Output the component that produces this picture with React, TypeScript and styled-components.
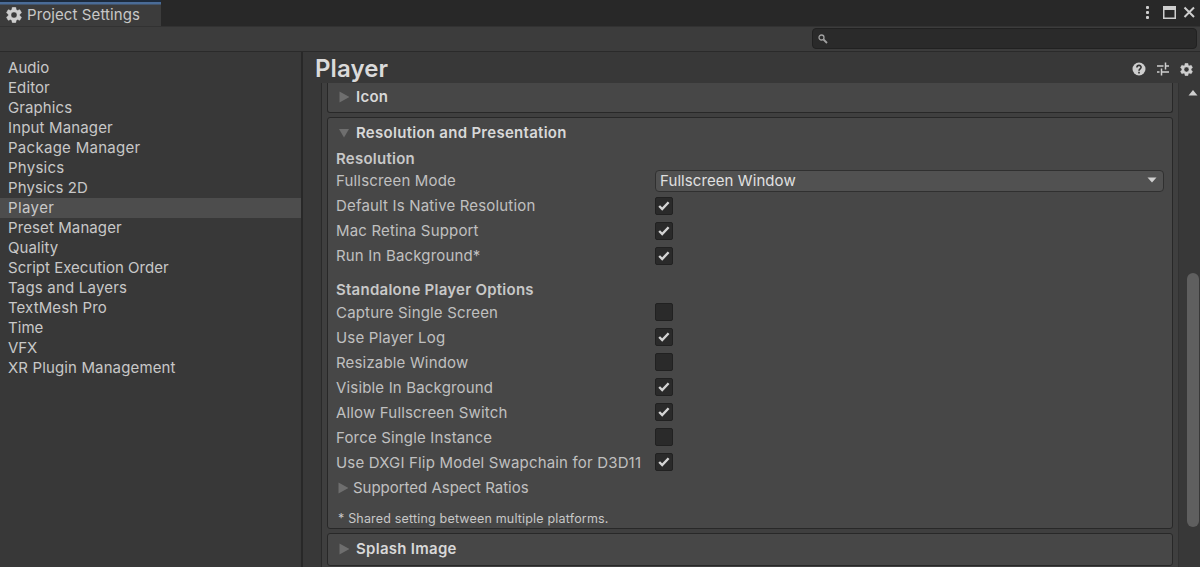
import React from "react";
import styled, { createGlobalStyle, css } from "styled-components";

const Global = createGlobalStyle`
  * { box-sizing: border-box; }
  body { margin: 0; background: #383838; overflow: hidden; }
`;

const Window = styled.div`
  width: 1200px;
  height: 567px;
  display: flex;
  flex-direction: column;
  overflow: hidden;
  background: #383838;
  color: #c8c8c8;
  font-family: Inter, "Liberation Sans", sans-serif;
  font-size: 15px;
  letter-spacing: 0.2px;
  white-space: nowrap;
`;

const TabBar = styled.header`
  flex: 0 0 26px;
  display: flex;
  justify-content: space-between;
  background: #282828;
`;

const Tab = styled.div`
  display: flex;
  align-items: center;
  gap: 5px;
  width: 161px;
  height: 26px;
  padding: 3px 0 0 6px;
  letter-spacing: 0.1px;
  background: #3c3c3c;
  box-shadow: inset 0 2px #1c2a3c, inset 0 4.5px #4a6c98;
`;

const WindowButtons = styled.div`
  display: flex;
  align-items: center;
  padding-right: 4px;
`;

const SearchBar = styled.div`
  flex: 0 0 26px;
  display: flex;
  justify-content: flex-end;
  padding: 1px 3px 0 0;
  background: #3c3c3c;
  border-top: 1px solid #323232;
  border-bottom: 1px solid #2a2a2a;
`;

const SearchField = styled.div`
  display: flex;
  align-items: center;
  width: 385px;
  height: 21px;
  padding-left: 5px;
  border: 1px solid #212121;
  border-radius: 4px;
  background: #2a2a2a;
`;

const Body = styled.div`
  flex: 1;
  min-height: 0;
  display: flex;
`;

const Sidebar = styled.nav`
  flex: 0 0 303px;
  padding-top: 6px;
  border-right: 2px solid #282828;
`;

const SidebarItem = styled.div<{ $selected?: boolean; $spacing?: number }>`
  height: 20px;
  padding-left: 8px;
  line-height: 20px;
  letter-spacing: ${(p) => p.$spacing ?? 0.2}px;
  background: ${(p) => (p.$selected ? "#4d4d4d" : "transparent")};
`;

const Main = styled.main`
  flex: 1;
  min-width: 0;
  display: flex;
  flex-direction: column;
`;

const TitleRow = styled.div`
  flex: 0 0 31px;
  display: flex;
  align-items: center;
  justify-content: space-between;
  padding: 2px 7px 0 12px;
`;

const Title = styled.h1`
  margin: 0;
  font-size: 24px;
  line-height: 29px;
  font-weight: 600;
  letter-spacing: 0.1px;
  color: #dadada;
`;

const TitleIcons = styled.div`
  display: flex;
  align-items: center;
  gap: 10px;
  padding-top: 1px;
`;

const ScrollArea = styled.div`
  flex: 1;
  min-height: 0;
  display: flex;
`;

const Panel = styled.div`
  flex: 0 0 858px;
  margin-left: 18px;
  padding: 0 5px 0 5px;
  background: #3f3f3f;
  border-left: 1px solid #2a2a2a;
  border-right: 1px solid #323232;
  overflow: hidden;
`;

const Card = styled.section<{ $height: number; $cut?: boolean }>`
  height: ${(p) => p.$height}px;
  margin-bottom: 4px;
  padding-left: 8px;
  background: #474747;
  border: 1px solid #282828;
  border-radius: 3px;
  ${(p) =>
    p.$cut &&
    css`
      border-top: 0;
      border-top-left-radius: 0;
      border-top-right-radius: 0;
    `}
`;

const CardHead = styled.div<{ $height: number }>`
  display: flex;
  align-items: center;
  gap: 7px;
  height: ${(p) => p.$height}px;
  padding-left: 3px;
  font-weight: 600;
  letter-spacing: 0.28px;
  color: #d8d8d8;
`;

const SubHead = styled.div<{ $gap?: number }>`
  height: 22px;
  margin-top: ${(p) => p.$gap ?? 0}px;
  line-height: 23px;
  font-weight: 600;
  letter-spacing: 0.25px;
`;

const Row = styled.div`
  display: flex;
  align-items: center;
  height: 25px;
  color: #c0c0c0;
`;

const ModeRow = styled(Row)`
  height: 23px;
  margin-bottom: 1px;
`;

const RowLabel = styled.span`
  flex: 0 0 319px;
  letter-spacing: 0.17px;
`;

const Foldout = styled(Row)`
  gap: 5px;
  padding-left: 2px;
  letter-spacing: -0.02px;
`;

const Note = styled.div`
  margin-top: 9px;
  padding-left: 2px;
  font-size: 12.5px;
  line-height: 20px;
  letter-spacing: 0.18px;
`;

const Dropdown = styled.div`
  display: flex;
  align-items: center;
  justify-content: space-between;
  width: 509px;
  height: 22px;
  padding: 0 6px 1px 4px;
  letter-spacing: 0.08px;
  color: #e0e0e0;
  background: #515151;
  border: 1px solid #303030;
  border-radius: 4px;
`;

const Box = styled.span<{ $lift?: boolean }>`
  display: flex;
  align-items: center;
  justify-content: center;
  width: 18px;
  height: 18px;
  margin-bottom: ${(p) => (p.$lift ? 1 : 0)}px;
  background: #2a2a2a;
  border: 1px solid #212121;
  border-radius: 2px;
`;

const ScrollBar = styled.div`
  flex: 1;
  display: flex;
  flex-direction: column;
  align-items: center;
  padding: 6px 1px 0 8px;
`;

const Thumb = styled.div`
  width: 12px;
  height: 254px;
  margin-top: 177px;
  border-radius: 6px;
  background: #5f5f5f;
`;

const GEAR =
  "M19.14 12.94a7.5 7.5 0 0 0 0-1.88l2.03-1.58a.5.5 0 0 0 .12-.61l-1.92-3.32a.5.5 0 0 0-.59-.22l-2.39.96a7 7 0 0 0-1.62-.94l-.36-2.54a.5.5 0 0 0-.48-.41h-3.84a.5.5 0 0 0-.47.41l-.36 2.54a7.4 7.4 0 0 0-1.62.94l-2.39-.96a.5.5 0 0 0-.59.22L2.74 8.87a.5.5 0 0 0 .12.61l2.03 1.58a7.5 7.5 0 0 0 0 1.88l-2.03 1.58a.5.5 0 0 0-.12.61l1.92 3.32c.12.22.37.29.59.22l2.39-.96c.5.38 1.03.7 1.62.94l.36 2.54c.05.24.24.41.48.41h3.84c.24 0 .44-.17.47-.41l.36-2.54a7.4 7.4 0 0 0 1.62-.94l2.39.96c.22.08.47 0 .59-.22l1.92-3.32a.5.5 0 0 0-.12-.61zM12 15.8a3.8 3.8 0 1 1 0-7.6 3.8 3.8 0 0 1 0 7.6z";

const Gear = ({ size }: { size: number }) => (
  <svg width={size} height={size} viewBox="2 2 20 20">
    <path d={GEAR} fill="#cecece" stroke="#cecece" strokeWidth="0.5" fillRule="evenodd" />
  </svg>
);

const Arrow = ({ open }: { open?: boolean }) => (
  <svg width="10" height="12" viewBox="0 0 10 12">
    <path d={open ? "M0 2H10L5 10.5Z" : "M0.5 0.5V11.5L10.5 6Z"} fill="#6e6e6e" />
  </svg>
);

const Check = ({ on, lift }: { on: boolean; lift?: boolean }) => (
  <Box $lift={lift}>
    {on && (
      <svg width="16" height="16" viewBox="0 0 16 16">
        <path d="M3.2 8L6.2 11L12.6 4.2" fill="none" stroke="#d4d4d4" strokeWidth="2.4" />
      </svg>
    )}
  </Box>
);

const categories: [string, number?][] = [
  ["Audio", 0.05],
  ["Editor", 0.1],
  ["Graphics", 0.1],
  ["Input Manager", 0.15],
  ["Package Manager", 0.28],
  ["Physics", 0.25],
  ["Physics 2D", 0.1],
  ["Player", 0.4],
  ["Preset Manager", 0.1],
  ["Quality", 0.1],
  ["Script Execution Order", 0.02],
  ["Tags and Layers"],
  ["TextMesh Pro", 0.1],
  ["Time", 0.05],
  ["VFX", -0.1],
  ["XR Plugin Management", 0.13],
];

const resolution: [string, boolean][] = [
  ["Default Is Native Resolution", true],
  ["Mac Retina Support", true],
  ["Run In Background*", true],
];

const standalone: [string, boolean][] = [
  ["Capture Single Screen", false],
  ["Use Player Log", true],
  ["Resizable Window", false],
  ["Visible In Background", true],
  ["Allow Fullscreen Switch", true],
  ["Force Single Instance", false],
  ["Use DXGI Flip Model Swapchain for D3D11", true],
];

const ToggleRow = ({ label, on, lift }: { label: string; on: boolean; lift?: boolean }) => (
  <Row>
    <RowLabel>{label}</RowLabel>
    <Check on={on} lift={lift} />
  </Row>
);

export default function App() {
  return (
    <Window>
      <Global />
      <TabBar>
        <Tab>
          <Gear size={16} />
          <span>Project Settings</span>
        </Tab>
        <WindowButtons>
          <svg width="53" height="16" viewBox="0 0 53 16">
            <g fill="#cecece">
              <rect x="3" y="1" width="3" height="3" rx="1" />
              <rect x="3" y="6" width="3" height="3" rx="1" />
              <rect x="3" y="11" width="3" height="3" rx="1" />
              <path d="M20 1H33V14H20ZM21.5 5V12.5H31.5V5Z" fillRule="evenodd" />
            </g>
            <path d="M41.5 2.5L51 12M51 2.5L41.5 12" stroke="#cecece" strokeWidth="2" />
          </svg>
        </WindowButtons>
      </TabBar>
      <SearchBar>
        <SearchField>
          <svg width="10" height="10" viewBox="0 0 10 10" fill="none" stroke="#a0a0a0">
            <circle cx="3.5" cy="3.5" r="2.5" strokeWidth="1.3" />
            <path d="M5.5 5.5L9 9" strokeWidth="1.8" />
          </svg>
        </SearchField>
      </SearchBar>
      <Body>
        <Sidebar>
          {categories.map(([name, spacing]) => (
            <SidebarItem key={name} $selected={name === "Player"} $spacing={spacing}>
              {name}
            </SidebarItem>
          ))}
        </Sidebar>
        <Main>
          <TitleRow>
            <Title>Player</Title>
            <TitleIcons>
              <svg width="14" height="14" viewBox="0 0 14 14">
                <circle cx="7" cy="7" r="6.5" fill="#cecece" />
                <path d="M4.9 5.5C4.9 2.7 9.1 2.7 9.1 5.3C9.1 6.8 7 6.9 7 8.7M7 9.8V11.4" fill="none" stroke="#333" strokeWidth="1.6" />
              </svg>
              <svg width="14" height="14" viewBox="0 0 14 14" fill="none" stroke="#cecece" strokeWidth="1.5">
                <path d="M1 4H7.5M9.5 0.5V7.5M9.5 4H13M1 10H3.5M5.5 6.5V13.5M5.5 10H13" />
              </svg>
              <Gear size={13} />
            </TitleIcons>
          </TitleRow>
          <ScrollArea>
            <Panel>
              <Card $height={30} $cut>
                <CardHead $height={27}><Arrow />Icon</CardHead>
              </Card>
              <Card $height={412}>
                <CardHead $height={29}><Arrow open />Resolution and Presentation</CardHead>
                <SubHead>Resolution</SubHead>
                <ModeRow>
                  <RowLabel>Fullscreen Mode</RowLabel>
                  <Dropdown>
                    Fullscreen Window
                    <svg width="10" height="6" viewBox="0 0 10 6">
                      <path d="M0.5 0.5H9.5L5 5.5Z" fill="#d0d0d0" />
                    </svg>
                  </Dropdown>
                </ModeRow>
                {resolution.map(([label, on]) => <ToggleRow key={label} label={label} on={on} />)}
                <SubHead $gap={10}>Standalone Player Options</SubHead>
                {standalone.map(([label, on]) => <ToggleRow key={label} label={label} on={on} lift />)}
                <Foldout><Arrow />Supported Aspect Ratios</Foldout>
                <Note>* Shared setting between multiple platforms.</Note>
              </Card>
              <Card $height={33}>
                <CardHead $height={29}><Arrow />Splash Image</CardHead>
              </Card>
            </Panel>
            <ScrollBar>
              <svg width="10" height="7" viewBox="0 0 10 7">
                <path d="M0.5 6.5L5 1L9.5 6.5Z" fill="#cecece" />
              </svg>
              <Thumb />
            </ScrollBar>
          </ScrollArea>
        </Main>
      </Body>
    </Window>
  );
}
